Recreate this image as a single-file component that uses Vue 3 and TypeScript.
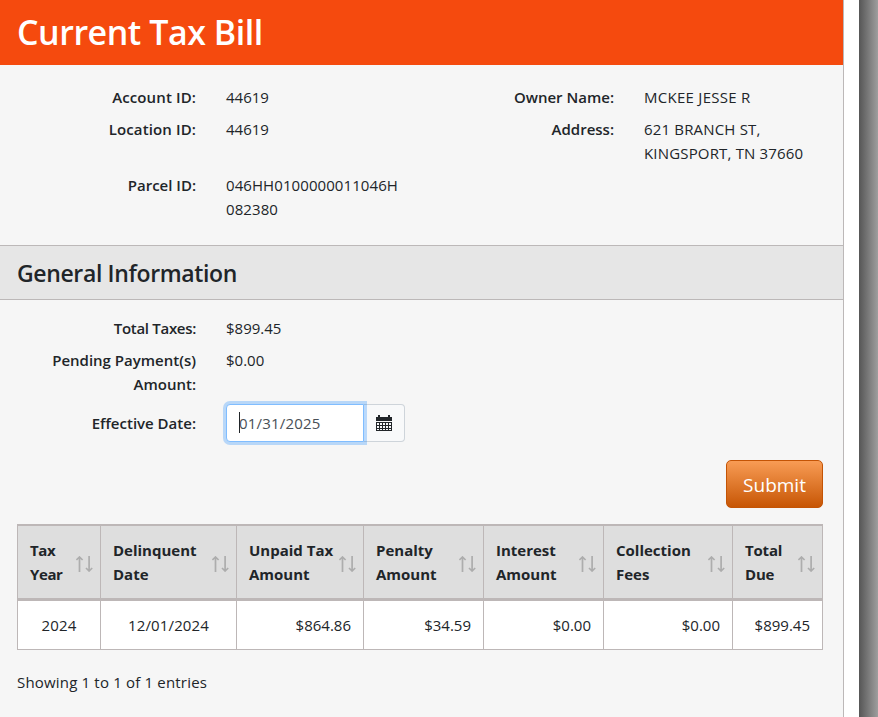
<template>
  <div class="page">
    <main class="panel">
      <h1 class="title">Current Tax Bill</h1>

      <section class="account">
        <dl class="details">
          <div v-for="item in accountDetails" :key="item.label" class="detail" :class="item.name">
            <dt>{{ item.label }}</dt>
            <dd>
              <div v-for="line in item.lines" :key="line">{{ line }}</div>
            </dd>
          </div>
        </dl>
      </section>

      <h2 class="section-title">General Information</h2>

      <section class="general">
        <dl class="summary">
          <div class="detail">
            <dt class="total-label">Total Taxes:</dt>
            <dd>$899.45</dd>
          </div>
          <div class="detail">
            <dt>Pending Payment(s)<br />Amount:</dt>
            <dd>$0.00</dd>
          </div>
        </dl>

        <div class="date-row">
          <label for="effective-date">Effective Date:</label>
          <div class="date-group">
            <div class="date-field">
              <input id="effective-date" v-model="effectiveDate" type="text" />
              <span class="caret"></span>
            </div>
            <button type="button" class="calendar-button" aria-label="Choose date">
              <svg width="16" height="16" viewBox="0 0 16 16" shape-rendering="crispEdges">
                <path d="M0 2h2V0h2v2h8V0h2v2h2v4H0z" fill="#212529" />
                <path d="M0 7h16v9H0z" fill="#212529" />
                <path
                  d="M1 8h2v2H1zM4 8h2v2H4zM7 8h2v2H7zM10 8h2v2h-2zM13 8h2v2h-2zM1 11h2v2H1zM4 11h2v2H4zM7 11h2v2H7zM10 11h2v2h-2zM13 11h2v2h-2zM1 14h2v1H1zM4 14h2v1H4zM7 14h2v1H7zM10 14h2v1h-2zM13 14h2v1h-2z"
                  fill="#f8f9fa"
                />
              </svg>
            </button>
          </div>
        </div>

        <div class="actions">
          <button type="button" class="submit">Submit</button>
        </div>

        <table class="bills">
          <colgroup>
            <col v-for="col in columns" :key="col.key" :style="{ width: col.width + 'px' }" />
          </colgroup>
          <thead>
            <tr>
              <th v-for="col in columns" :key="col.key" @click="sortBy(col.key)">
                <div class="heading">
                  <span>{{ col.title[0] }}<br />{{ col.title[1] }}</span>
                  <svg width="18" height="16" viewBox="0 0 18 16">
                    <path d="M3.5 16V1M0.4 4L3.5 1L6.6 4" />
                    <path d="M13.1 0V15M10 12L13.1 15L16.2 12" />
                  </svg>
                </div>
              </th>
            </tr>
          </thead>
          <tbody>
            <tr v-for="bill in sortedBills" :key="bill.year">
              <td v-for="col in columns" :key="col.key" :class="{ centered: col.centered }">
                {{ bill[col.key] }}
              </td>
            </tr>
          </tbody>
        </table>

        <p class="entries">Showing 1 to {{ bills.length }} of {{ bills.length }} entries</p>
      </section>
    </main>
    <div class="edge"></div>
  </div>
</template>

<script setup lang="ts">
import { computed, ref } from 'vue';

interface Bill {
  year: string;
  delinquent: string;
  unpaid: string;
  penalty: string;
  interest: string;
  fees: string;
  total: string;
}

interface Column {
  key: keyof Bill;
  title: [string, string];
  width: number;
  centered?: boolean;
}

const accountDetails = [
  { name: 'account-id', label: 'Account ID:', lines: ['44619'] },
  { name: 'owner', label: 'Owner Name:', lines: ['MCKEE JESSE R'] },
  { name: 'location-id', label: 'Location ID:', lines: ['44619'] },
  { name: 'address', label: 'Address:', lines: ['621 BRANCH ST,', 'KINGSPORT, TN 37660'] },
  { name: 'parcel', label: 'Parcel ID:', lines: ['046HH0100000011046H', '082380'] },
];

const columns: Column[] = [
  { key: 'year', title: ['Tax', 'Year'], width: 83, centered: true },
  { key: 'delinquent', title: ['Delinquent', 'Date'], width: 136, centered: true },
  { key: 'unpaid', title: ['Unpaid Tax', 'Amount'], width: 127 },
  { key: 'penalty', title: ['Penalty', 'Amount'], width: 120 },
  { key: 'interest', title: ['Interest', 'Amount'], width: 120 },
  { key: 'fees', title: ['Collection', 'Fees'], width: 129 },
  { key: 'total', title: ['Total', 'Due'], width: 91 },
];

const bills = ref<Bill[]>([
  {
    year: '2024',
    delinquent: '12/01/2024',
    unpaid: '$864.86',
    penalty: '$34.59',
    interest: '$0.00',
    fees: '$0.00',
    total: '$899.45',
  },
]);

const effectiveDate = ref('01/31/2025');
const sortKey = ref<keyof Bill | null>(null);
const ascending = ref(true);

const sortedBills = computed(() => {
  const key = sortKey.value;
  if (!key) return bills.value;
  const direction = ascending.value ? 1 : -1;
  return [...bills.value].sort((a, b) => a[key].localeCompare(b[key]) * direction);
});

function sortBy(key: keyof Bill) {
  ascending.value = sortKey.value === key ? !ascending.value : true;
  sortKey.value = key;
}
</script>

<style>
body {
  background: #fff;
}
</style>

<style scoped>
* {
  box-sizing: border-box;
}
.page {
  display: flex;
  width: 878px;
  height: 717px;
  overflow: hidden;
  font-family: "Open Sans", "Noto Sans", sans-serif;
  font-size: 15px;
  line-height: 24px;
  color: #212529;
}
.panel {
  width: 844px;
  flex: none;
  background: #f6f6f6;
  border-right: 1px solid #bcb8b8;
}
.edge {
  width: 19px;
  margin-left: 15px;
  background: linear-gradient(to right, #565656, #9e9e9e);
}
.title {
  height: 65px;
  margin: 0;
  padding-left: 17px;
  background: #f54a0e;
  color: #fff;
  font-size: 34px;
  font-weight: 600;
  letter-spacing: -0.47px;
  line-height: 64px;
}
.account {
  height: 180px;
  padding-top: 20px;
}
dl,
dd {
  margin: 0;
}
.details {
  display: grid;
  grid-template-columns: 418px 1fr;
  row-gap: 8px;
}
.detail {
  display: grid;
  grid-template-columns: 196px 1fr;
  column-gap: 30px;
}
dt,
label {
  font-weight: 600;
  text-align: right;
}
.account-id dt,
.location-id dt {
  letter-spacing: 0.12px;
}
.owner dd {
  letter-spacing: 0.28px;
}
.address dd {
  letter-spacing: 0.17px;
}
.parcel dd {
  letter-spacing: 0.08px;
}
.total-label {
  letter-spacing: -0.3px;
}
.section-title {
  height: 55px;
  margin: 0;
  padding-left: 17px;
  background: #e6e6e6;
  border-top: 1px solid #bcb8b8;
  border-bottom: 1px solid #bcb8b8;
  font-size: 23px;
  font-weight: 600;
  letter-spacing: -0.36px;
  line-height: 54px;
}
.general {
  padding-top: 16px;
}
.summary {
  display: grid;
  row-gap: 8px;
}
.date-row {
  display: grid;
  grid-template-columns: 196px 1fr;
  column-gap: 30px;
  align-items: center;
  margin-top: 8px;
}
.date-group {
  display: flex;
  height: 38px;
}
.date-field {
  position: relative;
  z-index: 1;
  width: 138px;
}
.date-field input {
  width: 100%;
  height: 38px;
  padding: 0 12px;
  border: 1px solid #80bdff;
  border-radius: 4px 0 0 4px;
  outline: none;
  background: #fff;
  box-shadow: 0 0 0 3px rgba(0, 123, 255, 0.25);
  color: #495057;
  font: inherit;
  letter-spacing: 0.2px;
}
.caret {
  position: absolute;
  left: 13px;
  top: 8px;
  width: 1px;
  height: 21px;
  background: #212529;
}
.calendar-button {
  display: flex;
  align-items: center;
  width: 41px;
  height: 38px;
  padding: 0 0 0 12px;
  border: 1px solid #ced4da;
  border-left: 0;
  border-radius: 0 4px 4px 0;
  background: #f8f9fa;
}
.actions {
  display: flex;
  justify-content: flex-end;
  margin: 18px 20px 16px 0;
}
.submit {
  width: 97px;
  height: 48px;
  padding: 2px 0 0;
  border: 1px solid #c45405;
  border-radius: 5px;
  background: linear-gradient(#f89c55, #c75605);
  color: #fff;
  font-family: inherit;
  font-size: 19px;
}
.bills {
  width: 806px;
  margin-left: 17px;
  table-layout: fixed;
  border-collapse: separate;
  border-spacing: 0;
}
.bills th,
.bills td {
  border-left: 1px solid #bdb7b7;
}
.bills th:last-child,
.bills td:last-child {
  border-right: 1px solid #bdb7b7;
}
.bills th {
  height: 77px;
  padding: 0 6px 0 12px;
  border-top: 2px solid #bdb7b7;
  border-bottom: 3px solid #bdb7b7;
  background: #dedede;
  font-weight: 700;
  text-align: left;
  cursor: pointer;
}
.bills th:first-child {
  letter-spacing: -0.4px;
}
.bills th:last-child {
  letter-spacing: -0.2px;
}
.heading {
  display: flex;
  align-items: center;
  justify-content: space-between;
  white-space: nowrap;
}
.heading svg {
  flex: none;
  margin-top: 4px;
  fill: none;
  stroke: #adadad;
  stroke-width: 1.7;
}
.bills td {
  height: 49px;
  padding: 0 12px;
  border-bottom: 1px solid #bdb7b7;
  background: #fff;
  text-align: right;
}
.bills td.centered {
  letter-spacing: 0.15px;
  text-align: center;
}
.entries {
  margin: 20px 0 0 17px;
  letter-spacing: 0.18px;
}
</style>
